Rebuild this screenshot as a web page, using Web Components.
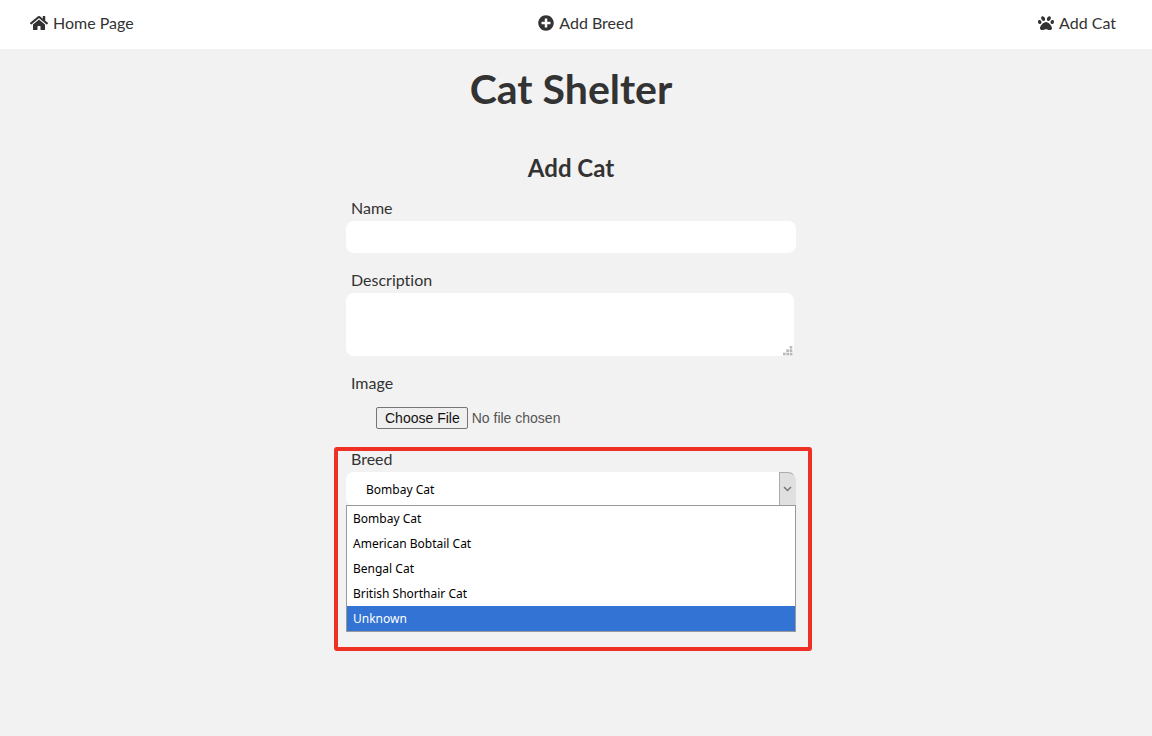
<!DOCTYPE html>
<html lang="en">
<head>
<meta charset="utf-8">
<title>Cat Shelter</title>
<style>
  body { margin: 0; background: #f2f2f2; color: #333; font: 16px/24px Lato, sans-serif; font-variant-ligatures: none; }
</style>
</head>
<body>
<cat-app></cat-app>

<template id="cat-nav">
  <style>
    :host { display: block; background: #fff; }
    nav { display: flex; justify-content: space-between; padding: 11px 36px 14px 30px; }
  </style>
  <nav><slot></slot></nav>
</template>

<template id="nav-link">
  <style>
    :host { display: block; }
    a { display: flex; align-items: center; gap: 5px; color: inherit; text-decoration: none; }
    svg { display: block; height: 16px; fill: currentColor; }
  </style>
  <a href="#"><svg aria-hidden="true"></svg><span><slot></slot></span></a>
</template>

<template id="form-field">
  <style>
    :host { display: block; }
    label { display: block; padding: 0 0 2px 5px; line-height: 22px; }
    input, textarea { display: block; box-sizing: border-box; border: 0; border-radius: 8px; background: #fff; font: inherit; padding: 4px 20px; outline: 0; }
    input { width: 100%; height: 32px; }
    .area { position: relative; margin-right: 2px; }
    textarea { width: 100%; height: 63px; resize: none; }
    .grip { position: absolute; right: 1px; bottom: 0; fill: #b9b9b9; }
    input[type=file] { height: 22px; margin-top: 11px; padding: 0 0 0 30px; border-radius: 0; background: none; color: #555; font: 14px/20px "Liberation Sans", Arial, sans-serif; }
    input::file-selector-button { box-sizing: border-box; height: 22px; margin: 0 4px 0 0; padding: 0 7px 0 8px; border: 1px solid #767676; border-radius: 2px; background: #efefef; color: #111; font: inherit; }
  </style>
  <label for="control"><slot></slot></label>
  <div class="slot"></div>
</template>

<template id="breed-select">
  <style>
    :host { display: block; font: 12px/25px "Noto Sans", Tahoma, sans-serif; color: #000; }
    .box { position: relative; }
    select { display: block; appearance: none; box-sizing: border-box; width: 100%; height: 34px; padding: 1px 36px 0 20px; border: 0; border-radius: 8px; background: #fff; color: inherit; font: inherit; outline: 0; }
    .arrow { position: absolute; top: 0; right: 0; bottom: 0; box-sizing: border-box; width: 17px; display: flex; align-items: center; justify-content: center; border: 1px solid #ababab; border-right-color: #e0e0e0; border-radius: 0 8px 0 0; background: #e0e0e0; pointer-events: none; }
    ul { position: absolute; top: 33px; left: 0; right: 0; margin: 0; padding: 0; list-style: none; background: #fff; border: 1px solid #999; }
    li { padding: 0 6px; }
    li[aria-selected=true] { background: #3273d3; color: #fff; }
  </style>
  <div class="box">
    <select id="breed" aria-label="Breed"></select>
    <span class="arrow"><svg width="9" height="6" viewBox="0 0 9 6"><path d="M1 1l3.500 3.500L8 1" fill="none" stroke="#777" stroke-width="1.500"/></svg></span>
    <ul role="listbox" aria-label="Breed"></ul>
  </div>
</template>

<template id="mark-frame">
  <style>
    :host { display: block; box-sizing: border-box; height: 204px; margin: 18px -16px 0 -12px; padding: 0 12px 0 8px; border: 4px solid #ee3124; border-radius: 3px; }
  </style>
  <slot></slot>
</template>

<template id="cat-app">
  <style>
    :host { display: block; }
    main { padding: 17px 10px 40px 0; }
    h1, h2 { margin: 0; text-align: center; font-weight: 700; }
    h1 { font-size: 41px; line-height: 46px; }
    h2 { margin-top: 41px; font-size: 24px; line-height: 30px; }
    form { width: 100%; max-width: 450px; margin: 14px auto 0; }
    .description { margin-top: 16px; }
    .image { margin-top: 16px; }
    .breed { display: block; padding-left: 5px; line-height: 16px; margin-bottom: 5px; }
  </style>
  <cat-nav>
    <nav-link icon="home">Home Page</nav-link>
    <nav-link icon="plus">Add Breed</nav-link>
    <nav-link icon="paw">Add Cat</nav-link>
  </cat-nav>
  <main>
    <h1>Cat Shelter</h1>
    <h2>Add Cat</h2>
    <form>
      <form-field>Name</form-field>
      <form-field class="description" kind="textarea">Description</form-field>
      <form-field class="image" kind="file">Image</form-field>
      <mark-frame>
        <label class="breed" for="breed-control">Breed</label>
        <breed-select id="breed-control"></breed-select>
      </mark-frame>
    </form>
  </main>
</template>

<script>
  class Base extends HTMLElement {
    constructor() {
      super();
      this.attachShadow({ mode: 'open', delegatesFocus: true })
        .append(document.getElementById(this.localName).content.cloneNode(true));
    }
  }

  const ICONS = {
    home: ['0 0 576 512', 'M280.400 148.300L96 300.100V464a16 16 0 0 0 16 16l112.100-.3a16 16 0 0 0 15.900-16V368a16 16 0 0 1 16-16h64a16 16 0 0 1 16 16v95.600a16 16 0 0 0 16 16.100L464 480a16 16 0 0 0 16-16V300L295.700 148.300a12.200 12.200 0 0 0-15.300 0zM571.600 251.500L488 182.600V44.100a12 12 0 0 0-12-12h-56a12 12 0 0 0-12 12v72.600L318.500 43a48 48 0 0 0-61 0L4.300 251.500a12 12 0 0 0-1.600 16.900l25.500 31A12 12 0 0 0 45.200 301l235.200-193.700a12.200 12.200 0 0 1 15.300 0L530.900 301a12 12 0 0 0 16.900-1.600l25.500-31a12 12 0 0 0-1.700-16.900z'],
    plus: ['0 0 512 512', 'M256 8C119 8 8 119 8 256s111 248 248 248 248-111 248-248S393 8 256 8zm144 276c0 6.600-5.400 12-12 12h-92v92c0 6.600-5.400 12-12 12h-56c-6.600 0-12-5.400-12-12v-92h-92c-6.600 0-12-5.400-12-12v-56c0-6.600 5.400-12 12-12h92v-92c0-6.600 5.400-12 12-12h56c6.600 0 12 5.400 12 12v92h92c6.600 0 12 5.400 12 12v56z'],
    paw: ['0 0 512 512', 'M256 224c-79.400 0-192 122.800-192 200.200 0 34.900 26.800 55.800 71.700 55.800 48.800 0 81.100-25.100 120.300-25.100 39.500 0 71.900 25.100 120.300 25.100 44.900 0 71.700-20.900 71.700-55.800C448 346.800 335.400 224 256 224zm-147.300-12.600c-10.400-34.700-42.400-57.100-71.500-50.100S-7 202.200 3.300 236.900s42.400 57.100 71.500 50.100 44.200-40.900 33.900-75.600zm84.100-20.800c30.900-8.100 43-48.800 27-90.800s-54.100-69.600-85.100-61.400-43 48.800-27 90.800 54.200 69.500 85.100 61.400zm282-29.300c-29.100-7-61.100 15.400-71.500 50.100s4.800 68.500 33.900 75.600 61.100-15.400 71.500-50.100-4.800-68.600-33.900-75.600zm-155.600 29.300c30.900 8.100 69-19.400 85.100-61.400s3.900-82.600-27-90.800-69 19.400-85.100 61.400-3.900 82.700 27 90.800z'],
  };

  customElements.define('cat-nav', class extends Base {});
  customElements.define('mark-frame', class extends Base {});

  customElements.define('nav-link', class extends Base {
    connectedCallback() {
      const [box, path] = ICONS[this.getAttribute('icon')];
      const svg = this.shadowRoot.querySelector('svg');
      svg.setAttribute('viewBox', box);
      svg.innerHTML = `<path d="${path}"/>`;
      svg.style.width = box === '0 0 576 512' ? '18px' : '16px';
    }
  });

  customElements.define('form-field', class extends Base {
    connectedCallback() {
      const holder = this.shadowRoot.querySelector('.slot');
      const kind = this.getAttribute('kind');
      if (kind === 'textarea') {
        const dots = [[6, 0], [3, 3], [6, 3], [0, 6], [3, 6], [6, 6]];
        holder.className = 'area';
        holder.innerHTML = '<textarea id="control"></textarea><svg class="grip" width="10" height="10" viewBox="0 0 9 9" aria-hidden="true">' +
          dots.map(([x, y]) => `<rect x="${x}" y="${y}" width="2.400" height="2.400"/>`).join('') + '</svg>';
      } else {
        holder.innerHTML = `<input id="control" type="${kind || 'text'}">`;
      }
    }
  });

  customElements.define('breed-select', class extends Base {
    connectedCallback() {
      const breeds = ['Bombay Cat', 'American Bobtail Cat', 'Bengal Cat', 'British Shorthair Cat', 'Unknown'];
      this.shadowRoot.querySelector('select').innerHTML = breeds.map(b => `<option>${b}</option>`).join('');
      this.shadowRoot.querySelector('ul').innerHTML = breeds
        .map(b => `<li role="option" aria-selected="${b === 'Unknown'}">${b}</li>`).join('');
    }
  });

  customElements.define('cat-app', class extends Base {});
</script>
</body>
</html>
